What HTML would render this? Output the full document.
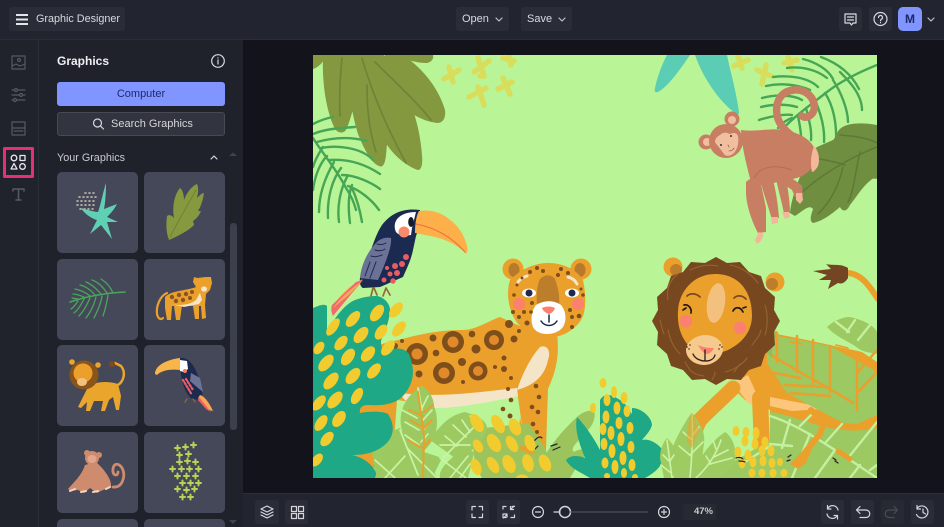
<!DOCTYPE html>
<html><head><meta charset="utf-8"><title>Graphic Designer</title>
<style>
*{box-sizing:border-box}
html,body{margin:0;padding:0;width:944px;height:527px;overflow:hidden;background:#13141b;font-family:"Liberation Sans",sans-serif}
#w{position:absolute;left:0;top:0;width:944px;height:527px;overflow:hidden;background:#13141b}
.a{position:absolute}
.btn{position:absolute;background:#2a2d38;border-radius:3px;color:#d9dae0;font-size:11px;line-height:24px;height:24px;white-space:nowrap}
.th{position:absolute;width:81px;height:81px;background:#454859;border-radius:5px;overflow:hidden}
svg{position:absolute;display:block;overflow:hidden}
</style></head><body><div id="w">
<div class="a" style="left:0;top:0;width:944px;height:40px;background:#22242f;border-bottom:1px solid #2b2d38"></div>
<div class="a" style="left:0;top:40px;width:39px;height:487px;background:#20222c;border-right:1px solid #2b2d38"></div>
<div class="a" style="left:39px;top:40px;width:204px;height:487px;background:#1f212b"></div>
<div class="a" style="left:243px;top:493px;width:701px;height:34px;background:#22242f;border-top:1px solid #2b2d38"></div>

<div class="btn" style="left:9px;top:7px;width:116px"><span class="a" style="left:27px;top:0;font-size:10.8px">Graphic Designer</span></div>
<div class="a" style="left:16px;top:14px;width:12px;height:1.5px;background:#e4e5ea;box-shadow:0 4.5px 0 #e4e5ea,0 9px 0 #e4e5ea"></div>
<div class="btn" style="left:456px;top:7px;width:53px;padding-left:6px">Open</div>
<div class="btn" style="left:521px;top:7px;width:51px;padding-left:6px">Save</div>
<div class="btn" style="left:839px;top:7px;width:23px"></div>
<div class="btn" style="left:869px;top:7px;width:23px"></div>
<div class="btn" style="left:898px;top:7px;width:24px;background:#8095ff;border-radius:5px;color:#1c2766;font-weight:bold;font-size:12px;text-align:center">M</div>

<div class="a" style="left:57px;top:53px;color:#f0f0f3;font-size:12px;font-weight:bold;line-height:16px">Graphics</div>
<div class="a" style="left:57px;top:82px;width:168px;height:24px;background:#8095ff;border-radius:3px;color:#1f2a6e;font-size:11px;line-height:24px;text-align:center">Computer</div>
<div class="a" style="left:57px;top:112px;width:168px;height:24px;background:#32353f;border:1px solid #474a55;border-radius:3px;color:#d5d6dc;font-size:11px;line-height:22px;padding-left:53px">Search Graphics</div>
<div class="a" style="left:57px;top:151px;color:#c9cad0;font-size:10.8px;line-height:14px">Your Graphics</div>
<div class="a" style="left:230px;top:223px;width:7px;height:207px;background:#3c3f4c;border-radius:3px"></div>

<div class="th" style="left:57px;top:172px"></div><div class="th" style="left:144px;top:172px"></div>
<div class="th" style="left:57px;top:259px"></div><div class="th" style="left:144px;top:259px"></div>
<div class="th" style="left:57px;top:345px"></div><div class="th" style="left:144px;top:345px"></div>
<div class="th" style="left:57px;top:432px"></div><div class="th" style="left:144px;top:432px"></div>
<div class="th" style="left:57px;top:519px;height:8px;border-radius:5px 5px 0 0"></div><div class="th" style="left:144px;top:519px;height:8px;border-radius:5px 5px 0 0"></div>

<div class="btn" style="left:255px;top:500px;width:24px"></div><div class="btn" style="left:285px;top:500px;width:23px"></div>
<div class="btn" style="left:466px;top:500px;width:23px"></div><div class="btn" style="left:497px;top:500px;width:23px"></div>
<div class="btn" style="left:821px;top:500px;width:23px"></div><div class="btn" style="left:851px;top:500px;width:23px"></div>
<div class="btn" style="left:881px;top:500px;width:23px;background:#272933"></div><div class="btn" style="left:911px;top:500px;width:23px"></div>
<div class="a" style="left:683px;top:504px;width:33px;height:16px;background:#272933;border-radius:2px;color:#c9cad0;font-size:9.5px;font-weight:bold;line-height:16px;text-align:right;padding-right:3px">47%</div>

<!-- chrome icons -->
<svg style="left:0;top:0" width="944" height="527" viewBox="0 0 944 527" fill="none" stroke-linecap="round" stroke-linejoin="round">
<g stroke="#d9dae0" stroke-width="1.2">
<path d="M496 18l3 3 3-3M559 18l3 3 3-3M928 18l3 3 3-3" stroke="#bfc0c7"/>
<path d="M845 14h11v9h-3l-1.500 2-1.500-2h-5zM847.500 17h6M847.500 20h6"/>
<circle cx="880.500" cy="19" r="6.500"/><path d="M878.500 17.500a2 2 0 1 1 3 1.700c-.7.400-1 .8-1 1.500M880.500 22.500v.2"/>
<circle cx="218" cy="61" r="6.300"/><path d="M218 60v4M218 57.800v.2"/>
<circle cx="97.500" cy="123" r="4"/><path d="M100.500 126l3 3"/>
<path d="M211 159l3-3 3 3"/>
</g>
<path d="M229 156l4-3.500 4 3.500zM229 520l4 4 4-4z" fill="#40434f"/>
<g stroke="#565966" stroke-width="1.200">
<rect x="12" y="56" width="13" height="13"/><circle cx="19" cy="60" r="1.500"/><path d="M12 66l4-2 4 2 5-2"/>
<path d="M12 90h13M12 95h13M12 100h13"/><circle cx="16" cy="90" r="1.500" fill="#20222c"/><circle cx="21" cy="95" r="1.500" fill="#20222c"/><circle cx="15" cy="100" r="1.500" fill="#20222c"/>
<rect x="12" y="122" width="13" height="13"/><path d="M12 128h13M14 131h9"/>
<path d="M13 189h11M13 189v2M24 189v2M18.500 189v11M16 200h5" stroke-width="1.500"/>
</g>
<rect x="4.500" y="148.500" width="28" height="28" stroke="#e62f78" stroke-width="3"/>
<g stroke="#e8e9ee" stroke-width="1.300">
<circle cx="14" cy="158" r="2.800"/><rect x="20" y="155.500" width="5" height="5"/><path d="M14 163.500l3 5.500h-6z"/><circle cx="22.500" cy="166.500" r="2.800"/>
</g>
<g stroke="#d5d6dc" stroke-width="1.200">
<path d="M267 506l6 3-6 3-6-3zM261 512l6 3 6-3M261 515l6 3 6-3"/>
<rect x="291.500" y="506.500" width="5" height="5"/><rect x="298.500" y="506.500" width="5" height="5"/><rect x="291.500" y="513.500" width="5" height="5"/><rect x="298.500" y="513.500" width="5" height="5"/>
<path d="M472 510v-3.500h3.500M479 506.500h3.500v3.500M482.500 514v3.500h-3.500M475.500 517.500h-3.500v-3.500"/>
<path d="M503 509v-2.500h3M512 506.500h2.500M503 514v3.500h3M511 517.500h3.500V515M514 506l-3.500 3.500M510.500 506.500v3h3M503.500 518l3.500-3.500M507 517v-3h-3"/>
<circle cx="538" cy="512" r="5.500"/><path d="M535.500 512h5"/>
<circle cx="664" cy="512" r="5.500"/><path d="M661.500 512h5M664 509.500v5"/>
<path d="M554 512h6"/><circle cx="565" cy="512" r="5.500" stroke-width="1.500"/>
<path d="M838 510a5.500 5.500 0 0 0-9.500-2.500l-1 1M827 514a5.500 5.500 0 0 0 9.500 2.500l1-1M827.500 505.500v3.500h3.500M837.500 519v-3.500H834"/>
<path d="M857 510h9a3.500 3.500 0 0 1 0 7.500h-6M860 506.500l-3.500 3.500 3.500 3.500"/>
<path d="M897 510h-8a3.500 3.500 0 0 0 0 7.500h5M894 506.500l3.500 3.500-3.500 3.500" stroke="#4a4c58"/>
<path d="M917 508.500a6 6 0 1 1-.5 6M917 505.500v3.500h3.500M923 509v3.500l2.500 1.500"/>
</g>
<path d="M570 512h78" stroke="#555863" stroke-width="1"/>
</svg>

<!-- thumbnails -->
<svg style="left:57px;top:172px" width="168" height="341" viewBox="57 172 168 341" fill="none" stroke-linecap="round" stroke-linejoin="round">
<g stroke="#c9c5b0" stroke-width="1.600" stroke-dasharray="1 3"><path d="M85 193h10M79 197h17M77 201h19M77 205h17M80 209h13"/></g>
<path d="M106 183C106 195 105 205 104 209L117 204C114 210 110 214 107 217L118 222 107 222 112 239 101 225 90 234 97 220C90 218 83 212 81 208 88 210 95 212 98 212 101 204 103 192 106 183z" fill="#5fd0b4"/>
<path d="M169 240C166 232 166 224 167 216 170 214 172 216 174 218 172 208 174 195 180 188 183 190 184 196 184 200 187 192 192 186 197 184 199 188 198 194 197 198 200 195 202 193 204 193 203 200 201 206 198 211L201 211C199 216 196 219 193 221L194 225C188 231 178 236 169 240z" fill="#86993f"/>
<path d="M170 237C176 225 186 208 196 190" stroke="#6e8238" stroke-width="1"/>
<g stroke="#4aa65a" stroke-width="1.300">
<path d="M125 292C105 293 88 296 70 302" stroke-width="1.600"/>
<path d="M113 293C110 286 106 282 101 279M107 293C103 287 98 282 92 280M101 294C97 289 91 284 86 282M95 295C91 290 85 286 80 285M90 296C85 292 80 290 75 289M84 297C79 295 76 294 73 294M78 299L72 298M108 295C107 302 105 310 103 316M102 296C101 304 97 312 94 318M96 297C94 305 90 313 86 318M90 298C87 305 84 311 79 316M84 299C81 305 78 310 74 313M78 301C76 304 74 307 71 309"/>
</g>
<path d="M167 293C160 296 156 306 157 314 158 319 161 320 163 318" stroke="#eba02c" stroke-width="2.200"/>
<path d="M165 297C172 290 186 291 196 287L193 282 194 277 197 278 206 277 211 277 212 283 210 290 206 294 205 305 206 318 202 319 201 306 199 306 199 319 195 319 193 306 182 305 180 320 176 320 174 306 172 306 171 320 167 320 165 308z" fill="#eba02c"/>
<path d="M171 304C180 306 190 305 196 300 198 297 199 294 200 293L202 300 199 304 184 307z" fill="#f5e6ca"/>
<g fill="#8a5520"><circle cx="172" cy="297" r="2.200"/><circle cx="179" cy="295" r="2.200"/><circle cx="186" cy="294" r="2.200"/><circle cx="192" cy="292" r="2"/><circle cx="176" cy="301" r="2.200"/><circle cx="183" cy="300" r="2.200"/><circle cx="190" cy="298" r="2"/></g>
<ellipse cx="204" cy="289" rx="3" ry="2.600" fill="#f5e6ca"/>
<path d="M88 387C96 381 108 381 118 384L121 396 119 410 116 410 113 397 109 400 105 411 101 411 103 401 94 401 90 411 86 411 87 402 81 408 78 407z" fill="#e9a52c"/>
<path d="M118 385C124 381 126 372 121 366L115 363" stroke="#e9a52c" stroke-width="2.500"/><circle cx="112" cy="364" r="3" fill="#7e4a1d"/>
<circle cx="72" cy="362" r="2.800" fill="#e9a52c"/><circle cx="98" cy="365" r="2.800" fill="#e9a52c"/>
<circle cx="84" cy="375" r="14.500" fill="#8b5419"/><circle cx="83" cy="373" r="9.500" fill="#eba02c"/><ellipse cx="82" cy="382" rx="5" ry="4" fill="#f3c07e"/>
<path d="M155 374C155 366 165 360 180 358L180 370C171 369 162 370 157 375z" fill="#f7b54a"/>
<path d="M180 358C190 357 196 368 200 382 203 392 203 398 200 400L192 399C184 392 180 380 180 358z" fill="#1c2a4f"/>
<path d="M180 360L187 361 188 369 184 372 180 371z" fill="#fff"/><circle cx="185" cy="371" r="2" fill="#f07f63"/>
<path d="M191 373L200 378 203 392 198 388 190 381z" fill="#6b7296"/>
<path d="M200 395C204 396 209 402 213 411 207 410 202 405 198 398z" fill="#f6a855"/><path d="M199 397L211 412 206 409 198 400z" fill="#ef5f66"/>
<path d="M183 380L192 395M186 379L193 390" stroke="#ee5c63" stroke-width="2.200" stroke-dasharray="1.500 2"/>
<path d="M187 399l-2 3M193 399l2 3" stroke="#8f6a3a" stroke-width="1.300"/>
<path d="M113 487C123 488 125 476 123 470 120 462 112 462 113 472 114 476 118 476 118 472" stroke="#cf8b6e" stroke-width="2.800"/>
<path d="M85 465L96 462C105 470 112 480 111 487L103 490 97 493 90 488 84 493 78 490 70 491 68 489C74 482 82 475 85 465z" fill="#cf8b6e"/>
<path d="M70 491l5-2M81 492l5-1M93 492l5-1M106 489l4-2" stroke="#f1d7bf" stroke-width="2"/>
<circle cx="87" cy="453" r="3" fill="#cf8b6e"/><circle cx="99" cy="455" r="3" fill="#cf8b6e"/><circle cx="92" cy="458" r="7" fill="#cf8b6e"/><ellipse cx="92" cy="459" rx="4.500" ry="4" fill="#e3a68b"/>
<g stroke="#b7d255" stroke-width="2">
<path d="M175 448h5M177.500 445.500v5M183 447h5M185.500 444.500v5M191 445h5M193.500 442.500v5M177 455h5M179.500 452.500v5M186 454h5M188.500 451.500v5M177 462h5M179.500 459.500v5M185 461h5M187.500 458.500v5M193 462h5M195.500 459.500v5M170 469h5M172.500 466.500v5M179 469h5M181.500 466.500v5M187 469h5M189.500 466.500v5M196 469h5M198.500 466.500v5M175 476h5M177.500 473.500v5M184 476h5M186.500 473.500v5M193 476h5M195.500 473.500v5M180 483h5M182.500 480.500v5M188 483h5M190.500 480.500v5M196 483h5M198.500 480.500v5M175 489h5M177.500 486.500v5M184 490h5M186.500 487.500v5M192 489h5M194.500 486.500v5M180 497h5M182.500 494.500v5M188 497h5M190.500 494.500v5"/>
</g>
</svg>

<!-- canvas -->
<svg style="left:313px;top:55px" width="564" height="423" viewBox="313 55 564 423" fill="none" stroke-linecap="round" stroke-linejoin="round">
<rect x="313" y="55" width="564" height="423" fill="#b9f596"/>
<g stroke="#d8de5b" stroke-width="5.500">
<path d="M444 79L459 70M449 67L453 82"/>
<path d="M474 72L489 61M478 58L484 76 480 76"/>
<path d="M469 97L486 88M478 87L484 105"/>
<path d="M498 89L512 82M503 78L510 94"/>
<path d="M503 58L514 61M509 56L511 65"/>
<path d="M734 66L748 60M738 56L742 68"/>
<path d="M757 70L771 76M766 65L762 84"/>
<path d="M784 63L797 60M788 57L792 70"/>
</g>
<g fill="#83983f">
<path d="M313 55h12c0 6-6 12-12 14z"/>
<path d="M323 55h38c-2 25-6 55-15 75-3 4-8 3-11-1-10-20-13-50-12-74z"/>
<path d="M359 55h22c8 28 8 74 5 100-1 9-3 13-7 11-6-2-14-14-21-32-7-22-11-55-12-79z"/>
<path d="M362 55h22c22 30 35 62 38 100 1 10-1 15-4 15-10-3-25-14-34-30-14-25-22-55-22-85z"/>
<path d="M385 55h18c22 15 36 35 42 55 1 8-2 13-8 13-15-2-29-10-36-20-10-15-16-30-16-48z"/>
<path d="M398 55h35c1 3-1 7-6 8-10 0-22-3-29-8z"/>
</g>
<g stroke="#6e8238" stroke-width="1.600">
<path d="M342 58c-2 20-3 38-2 58M367 85c0 25 2 45 9 67M362 58c10 35 25 70 44 105M375 62c20 20 40 38 56 58"/>
</g>
<g stroke="#46a655" stroke-width="2.400">
<path d="M313 138c10 16 24 32 33 50 4 6 8 14 10 22"/>
<path d="M313 124c8-4 14-6 20-7M313 134c12-5 26-6 42-7M317 142c18-5 35-5 50-1M321 148c15-3 40-1 52 12M330 160c14-1 32 2 50 14M342 175c14 0 30 8 38 14M348 186c12 4 24 14 31 24M313 167c2-7 6-14 10-20M313 190c2-16 8-28 14-34M319 212c0-20 8-38 15-50M328 218c-1-20 4-38 13-50M339 222c-2-15 1-32 8-45M350 223c-2-15-2-28 2-38M362 222c-2-12-6-25-10-34"/>
</g>
<path d="M667 55h23c-9 13-22 32-32 37-3 1-4-1-3-4 2-10 7-24 12-33z" fill="#5bcdb4"/>
<path d="M695 55h32c3 15 9 35 12 57 0 3-2 3-4 1-16-12-32-35-40-58z" fill="#5bcdb4"/>
<g stroke="#46a655" stroke-width="2.400">
<path d="M877 65c-20 8-37 17-50 27-18 14-35 26-47 40"/>
<path d="M803 59c12 3 25 10 30 20M821 57c16 6 30 16 38 32M840 72c8 8 22 22 22 38M833 80c8 12 15 30 15 42M787 68c15-2 30 2 40 10M773 77c15-2 35 0 45 10M766 86c14-3 30-2 44 4M762 98c14-4 32-3 40 2M761 107c12-3 26-3 36 0M759 120c12-4 26-6 33-5M778 128c4-5 8-8 14-10M825 93c8 12 12 30 11 50M815 100c6 14 10 28 9 42M806 108c3 12 6 22 5 32M798 115c1 8 3 15 3 22"/>
</g>
<path d="M877 125c-15-3-30-2-36 3-5 4-4 8-8 12l-16 7c-8 7-13 18-17 30-5 12-9 25-10 36l5 3c8-5 14-12 18-7 -2 6-4 12 0 14 10-2 20-10 27-16 2 4 6 6 10-2 8-10 12-18 21-25 2-3 6 0 6-2z" fill="#6f8e40"/>
<g stroke="#5c7a36" stroke-width="1.500"><path d="M877 147c-30 12-60 30-80 50M843 167c-3 15-12 35-25 47M860 152c-4 15-6 40-12 50M845 165c-15-5-30-7-45-8M840 135c15 1 28 3 37 8"/></g>
<path d="M803 143c-10-6-24-15-26-28-2-15 5-24 17-25 13-1 22 9 20 20-2 6-8 9-12 6" stroke="#c87e62" stroke-width="7.500"/>
<path d="M741 130C755 132 770 128 785 130 800 133 812 140 815 150 818 160 812 172 800 177 790 180 770 184 752 186 748 170 742 150 741 130z" fill="#c87e62"/>
<path d="M746 182C752 176 758 178 761 184L766 208 766 232 758 233C752 222 746 205 746 192z" fill="#c87e62"/>
<path d="M760 178L772 176C776 190 778 205 779 218L772 220C768 205 762 190 760 178z" fill="#c87e62"/>
<path d="M776 178L786 178C788 190 790 202 790 213L784 214C782 202 778 190 776 178z" fill="#c87e62"/>
<path d="M766 168C780 172 794 178 802 186L803 196 795 197 792 190C785 184 772 180 760 178z" fill="#c87e62"/>
<path d="M814 146c5 5 6 14 4 20-1 2-4 6-6 6-2-8-1-18 2-26z" fill="#f4b79a"/>
<path d="M754 178c6-12 22-14 38-8" stroke="#b46e54" stroke-width="1"/>
<path d="M759 232l5 2-3 7-4 3-2-4zM771 217h7l0 6-6 1zM782 212h7l1 5-5 2zM796 193h6l1 7-3 4-4-4z" fill="#f0b79a"/>
<circle cx="732" cy="119" r="7.500" fill="#c87e62"/><circle cx="732" cy="120" r="4" fill="#f2bea0"/>
<circle cx="706" cy="142" r="7.500" fill="#c87e62"/><circle cx="707" cy="142" r="4" fill="#f2bea0"/>
<ellipse cx="726" cy="141" rx="17" ry="17" fill="#c87e62"/>
<path d="M720 135c4-4 8-2 10-1 4-2 7-1 8 2 1 6 0 12-4 17-3 3-8 4-10 1-4-6-8-10-9-12 0-4 3-6 5-7z" fill="#f2bea0"/>
<circle cx="721" cy="145" r="1" fill="#333"/><circle cx="731" cy="136" r="1" fill="#333"/><path d="M729 151c2 0 4-1 5-3M728 145l1 2" stroke="#8a5a48" stroke-width=".8"/>
<path d="M848 273c14 1 22 14 30 26" stroke="#eba02c" stroke-width="6"/>
<path d="M848 268c-8-5-15-2-22-4l5 5-18 2 14 4-8 5 12 0-3 9 10-6c5 2 8-2 10-5z" fill="#744522"/>
<path d="M765 332C790 336 830 345 862 352L877 362 877 478 770 478 770 410 745 400 733 388 755 360z" fill="#eba02c"/>
<path d="M733 383l15-8 15 33-15-5z" fill="#fcc77d"/><path d="M770 397l47 9 5 3-30 2-22-5z" fill="#fcc77d"/>
<path d="M733 388c-12 12-26 24-33 32-5 8-6 18-8 28" stroke="#eba02c" stroke-width="15"/>
<path d="M760 398l2 50" stroke="#eba02c" stroke-width="16"/>
<path d="M770 412C800 416 835 438 877 428L877 478 700 478C720 470 745 455 770 440z" fill="#9cc962"/>
<path d="M827 327c5-5 15-10 22-10 12 2 25 8 28 15v22c-10-2-15-2-22-8-8-5-20-10-28-19z" fill="#9cc962"/>
<path d="M761 333l16-2 0 6-14 6-3-3z" fill="#8fbd5f"/>
<path d="M767 346L777 336 830 346 877 372 877 415 857 424 843 423 813 407 787 393 767 363z" fill="#9cc962"/>
<g stroke="#eb9f2c" stroke-width="2.500">
<path d="M767 352C790 368 825 385 853 403M857 360L857 410M777 333V362M797 336V372M813 340V384M830 346V392M775 373L800 378M785 385L827 387M790 393L830 396M877 350L858 372M877 372L858 392"/>
<path d="M836 345l12 3M852 352l10 5M790 342l12 2" stroke-width="1.600"/>
</g>
<g stroke="#c4f1a0" stroke-width="2.400">
<path d="M770 416C800 425 835 450 877 478M800 426l14-14M826 442l16-18M848 458l29-36M870 470l7-5M790 420l-8 28M810 434l-18 44M835 450l-20 28M860 465l-10 13M770 444l22 2M745 462l25-16"/>
<path d="M836 322l13 10M855 320l-8 12M870 325l-12 15"/>
</g>
<path d="M811 410c4 4 8 8 14 9l-5 15-18 22" stroke="#eb9f2c" stroke-width="6"/>
<path d="M790 464l14-14 8-1-6 14-8 6z" fill="#eb9f2c"/>
<path d="M838 451l12 8" stroke="#eb9f2c" stroke-width="5"/>
<path d="M762 340l10 8 0 10-8-8z" fill="#8fbd5f"/>
<circle cx="673" cy="267" r="9.500" fill="#eba02c"/><circle cx="676" cy="270" r="6" fill="#bd7e2c"/>
<circle cx="775" cy="282" r="9.500" fill="#eba02c"/><circle cx="772" cy="284" r="6" fill="#bd7e2c"/>
<path d="M780 321L774 332 775 345 765 354 761 366 749 370 741 380 727 379 716 385 705 379 692 380 683 370 671 366 667 354 657 345 658 332 652 321 658 310 657 297 667 288 671 276 683 272 691 262 705 263 716 257 727 263 740 262 749 272 761 276 765 288 775 297 774 310z" fill="#774820"/>
<g stroke="#96632f" stroke-width="1.100"><path d="M690 270c8-4 18-6 28-4M730 265c12 2 22 10 28 18M668 300c-2-12 2-20 10-26M765 305c3 10 3 20 0 30M668 330c2 10 6 18 12 24M690 370c4 4 8 5 14 6M725 372c8-2 16-6 22-14M752 345c4-5 8-10 9-15M660 320c2 6 2 10 4 14M712 380c2-3 3-5 3-8M685 362l5 8M740 364l-6 8"/></g>
<path d="M715 274c26 0 37 20 37 41 0 17-10 28-24 35-13 5-26 6-38-3-8-8-13-20-12-36 1-20 16-37 37-37z" fill="#eba02c"/>
<ellipse cx="716" cy="303" rx="9" ry="20" transform="rotate(8 716 303)" fill="#f3c07e"/>
<circle cx="686" cy="321" r="6.300" fill="#fb8070"/><circle cx="740" cy="328" r="6.300" fill="#fb8070"/>
<path d="M686 350c0-8 10-15 19-15 10 0 18 6 18 14 0 8-9 16-19 16-10 0-18-7-18-15z" fill="#f6c98c"/>
<path d="M698 345c6 3 12 3 16 3-2 4-5 6-7 6-3 0-7-5-9-9z" fill="#fb8070"/>
<path d="M693 354c2 5 8 7 12 7 5 0 9-2 10-6M705 350v11" stroke="#2a1c1c" stroke-width="1.300"/>
<path d="M687 347v.1M690 345v.1M689 349v.1M719 349v.1M722 347v.1M720 345v.1" stroke="#2a1c1c" stroke-width="1.400"/>
<path d="M687 296c3-3 9-3 13 1M734 298c3-3 8-3 12 1" stroke="#7a4a20" stroke-width="1.800"/>
<path d="M684 305c4-1 8 3 7 8M683 310l3-2M733 311c2-4 7-5 10 1M743 308l3-1" stroke="#22181a" stroke-width="1.700"/>
<path d="M525 447l-8-57-90 14-30-4-5 70-50-5-10-40 15-60 30-20c25-5 50-15 85-15 15 0 28-10 38-13l35 16 22 0c3 25-2 40-9 56l-2 60 2 22-8 2-9 0-3-16-8-40-4 47z" fill="#eba02c"/>
<path d="M540 347C548 344 551 352 548 360 545 375 535 385 517 390 522 375 530 358 540 347z" fill="#f4e5c9"/>
<path d="M400 393C440 398 480 392 517 388L518 396C490 402 460 408 437 408 420 408 405 405 400 393z" fill="#f4e5c9"/>
<circle cx="513" cy="269" r="10.500" fill="#eba02c"/><ellipse cx="514" cy="270" rx="5.500" ry="7" fill="#b67a2a"/>
<circle cx="581" cy="269" r="10.500" fill="#eba02c"/><ellipse cx="580" cy="270" rx="5.500" ry="7" fill="#b67a2a"/>
<path d="M510 280c12-12 26-17 38-17 15 0 28 6 35 17 3 14 3 28 0 36-6 14-22 22-37 22-12 0-26-8-33-22-6-14-6-26-3-36z" fill="#eba02c"/>
<path d="M540 279c5-5 11-5 15 0 3 8 5 18 4 26l-22 0c-1-10 0-20 3-26z" fill="#bd7e2c"/>
<path d="M527 276c-3 1-7 3-9 6M568 277c4 1 7 3 9 7" stroke="#f4e5c9" stroke-width="3"/>
<path d="M536 305c8-5 18-5 25 0 5 6 6 15 2 22-4 5-10 7-16 7-7 0-12-3-14-7-3-8-1-17 3-22z" fill="#fff"/>
<path d="M542 308c4-2 9-2 13 0-1 3-3 5-6 6-3-1-6-3-7-6z" fill="#fb8070"/>
<path d="M541 321c4 6 12 6 16 0M549 315v7" stroke="#1d2950" stroke-width="1.500"/>
<circle cx="519" cy="304" r="6" fill="#fb8070"/><circle cx="578" cy="304" r="6" fill="#fb8070"/>
<ellipse cx="529" cy="293" rx="7" ry="4.500" fill="#fff"/><circle cx="529" cy="293" r="3.500" fill="#1d2950"/>
<ellipse cx="572" cy="293" rx="7" ry="4.500" fill="#fff"/><circle cx="572" cy="293" r="3.500" fill="#1d2950"/>
<g fill="#7e4e1b">
<circle cx="453" cy="342" r="11"/><circle cx="494" cy="340" r="10"/><circle cx="417" cy="354" r="11"/><circle cx="444" cy="373" r="11"/><circle cx="478" cy="371" r="9.500"/>
<circle cx="433" cy="338" r="3.500"/><circle cx="472" cy="334" r="3.300"/><circle cx="476" cy="349" r="4.500"/><circle cx="509" cy="324" r="4"/><circle cx="514" cy="339" r="3.500"/><circle cx="436" cy="353" r="3.300"/><circle cx="462" cy="362" r="4"/><circle cx="495" cy="367" r="2"/><circle cx="504" cy="369" r="3"/><circle cx="504" cy="358" r="2.500"/><circle cx="419" cy="374" r="3.500"/><circle cx="463" cy="382" r="2"/><circle cx="511" cy="378" r="2"/><circle cx="519" cy="331" r="2"/><circle cx="527" cy="323" r="2.500"/><circle cx="519" cy="317" r="2"/><circle cx="513" cy="312" r="2"/><circle cx="524" cy="312" r="2"/><circle cx="531" cy="312" r="1.800"/><circle cx="532" cy="303" r="2"/><circle cx="570" cy="310" r="2"/><circle cx="572" cy="317" r="2"/><circle cx="579" cy="316" r="2.300"/><circle cx="572" cy="327" r="2"/><circle cx="508" cy="389" r="2"/><circle cx="511" cy="400" r="2.300"/><circle cx="503" cy="409" r="2.300"/><circle cx="510" cy="416" r="2.500"/><circle cx="536" cy="386" r="2.300"/><circle cx="539" cy="397" r="2.300"/><circle cx="532" cy="407" r="2.300"/><circle cx="538" cy="412" r="2.300"/><circle cx="533" cy="424" r="2.300"/><circle cx="537" cy="432" r="2"/><circle cx="402" cy="341" r="2"/><circle cx="530" cy="272" r="2"/><circle cx="537" cy="268" r="2"/><circle cx="543" cy="271" r="2"/><circle cx="558" cy="275" r="2"/><circle cx="561" cy="269" r="2"/><circle cx="568" cy="273" r="2"/><circle cx="522" cy="278" r="1.500"/><circle cx="517" cy="285" r="1.500"/><circle cx="514" cy="295" r="1.800"/><circle cx="583" cy="295" r="1.800"/><circle cx="581" cy="289" r="1.500"/>
<circle cx="385" cy="358" r="3"/><circle cx="379" cy="358" r="3"/><circle cx="395" cy="346" r="3"/>
</g>
<g fill="#e2892a"><circle cx="453" cy="342" r="5.500"/><circle cx="494" cy="340" r="5"/><circle cx="417" cy="354" r="5.500"/><circle cx="444" cy="373" r="5.500"/><circle cx="478" cy="371" r="5"/></g>
<path d="M333 450c12 10 24 9 32 4" stroke="#eba02c" stroke-width="6"/>
<path d="M378 450l-5 14 14 8 6-20z" fill="#eba02c"/>
<path d="M420 210C405 208 392 212 382 225 375 235 372 250 362 272 358 280 360 287 363 288L380 287 403 277C407 268 411 260 413 250L416 236 420 225z" fill="#1b2a50"/>
<path d="M416 212L412 228 411 235C405 236 399 236 396 232 394 228 394 222 398 218 402 214 408 212 416 212z" fill="#fff"/>
<ellipse cx="411" cy="222" rx="2.800" ry="5" fill="#141a2c"/>
<circle cx="404" cy="232" r="5.500" fill="#fa8a6c"/>
<path d="M419 211c12-2 24 2 31 9 9 6 15 17 17 26 1 4 0 7-1 8-8-9-19-14-31-17l-20-4c0-8 1-17 4-22z" fill="#fdb04a"/>
<path d="M416 224c16 3 33 10 49 28" stroke="#ee6b3f" stroke-width="1"/>
<path d="M391 238C392 246 386 262 378 280L360 278C361 265 368 250 378 241 382 238 387 237 391 238z" fill="#6b7296"/>
<g stroke="#1b2a50" stroke-width="1"><path d="M386 243c-3 2-6 2-9 1M385 249c-3 2-7 2-10 1M382 255c-4 2-8 2-11 1M370 262l-5 14M376 262l-6 16"/></g>
<g fill="#ea5c63"><circle cx="406" cy="257" r="3"/><circle cx="402" cy="264" r="3"/><circle cx="395" cy="266" r="3"/><circle cx="397" cy="273" r="3"/><circle cx="390" cy="274" r="2.500"/><circle cx="393" cy="281" r="2.700"/><circle cx="384" cy="280" r="2.500"/><circle cx="387" cy="268" r="2"/></g>
<path d="M363 279C350 285 338 296 331 310L345 294z" fill="#f8b650"/><path d="M363 280L333 316C331 312 331 308 332 305L356 282z" fill="#f4696e"/><path d="M362 281C352 288 340 298 333 308L350 294z" fill="#f5a95a"/>
<path d="M373 288l-2 8M374 288l3 7M386 288l-3 8M386 288l4 7" stroke="#8f6a3a" stroke-width="1.700"/>
<path d="M475 428c20 0 40 -4 53-5 8 10 22 30 26 50l-2 5h-70c-10-15-10-35-7-50z" fill="#9dc45c"/>
<path d="M536 478c2-15 18-40 40-60 6-6 12-8 18-7 2 6 0 15-12 25-6 8-12 12-8 16 3-2 10-4 16-2-8 8-14 18-20 28z" fill="#9dc45c"/>
<g fill="#9cc960">
<path d="M422 386c4 2 12 10 12 20 4 10 4 22 0 32-5 8-10 14-15 16-8-4-16-18-18-28 -2-15 4-30 21-40z"/>
<path d="M430 440c10-15 20-25 35-28 12 4 22 8 22 17-4 14-18 26-32 29z"/>
<path d="M370 440l30-12 12 20 30 10-10 20h-56z"/>
<path d="M440 478c-2-8 8-18 22-28 6-2 10 0 12 3l-6 25z"/>
<path d="M395 478l8-30 18 6 17 24z"/>
</g>
<g stroke="#c9f4a3" stroke-width="1.700">
<path d="M418 388l4 22M402 410l15 8M405 422l14 8M428 396l-7 14M432 410l-9 10M430 422l-7 8M405 435l14 10M428 434l-7 8M443 458l30-30M445 436l12 10M453 425l13 12M462 420l8 12M470 416l12 8M440 445l30 0M437 478l-30-30M400 430l18 45M385 478l20-22M375 460l20 18M440 458l26 20M450 478l18-22M460 478l10-14"/>
</g>
<path d="M418 392l6 44-1 42M423 416l-14-6M424 428l-14-8M424 412l9-7M424 428l8-8M422 448l-14-8M423 448l7-8" stroke="#eb9f2c" stroke-width="2"/>
<path d="M530 447c5-8 9-12 12-9M553 450l7-3M551 446l6-2M535 449l3-3" stroke="#1d2433" stroke-width="1.200"/>
<path d="M522 448l10 4" stroke="#eba02c" stroke-width="5"/>
<path d="M313 308c5-2 11-5 14-2l0 26c8-15 18-28 28-32 8-3 15-4 22-4 6 1 12 6 13 13 0 8-3 18-8 29-2 4-1 9 2 14 10-5 20-5 25 2 6 15 6 28-6 42-8 8-20 10-35 9-6 0-9 3-8 8 10-2 22-2 28 1 8 12 6 25-6 33-9 6-17 8-30 8 14 3 22 12 24 18 0 5-2 9-5 10h-60z" fill="#1ea886"/>
<g fill="#f2cc2e">
<ellipse cx="353" cy="319" rx="9.500" ry="5" transform="rotate(-50 353 319)"/><ellipse cx="377" cy="313" rx="9.500" ry="5.500" transform="rotate(-55 377 313)"/><ellipse cx="333" cy="327" rx="10" ry="4.500" transform="rotate(-55 333 327)"/><ellipse cx="396" cy="310" rx="9" ry="5" transform="rotate(-50 396 310)"/><ellipse cx="399" cy="329" rx="9" ry="5" transform="rotate(-50 399 329)"/>
<ellipse cx="341" cy="343" rx="8.500" ry="5" transform="rotate(-50 341 343)"/><ellipse cx="361" cy="335" rx="9.500" ry="5.500" transform="rotate(-50 361 335)"/><ellipse cx="381" cy="332" rx="8.500" ry="5" transform="rotate(-55 381 332)"/><ellipse cx="348" cy="357" rx="9.500" ry="5.500" transform="rotate(-55 348 357)"/><ellipse cx="368" cy="354" rx="9" ry="5.500" transform="rotate(-50 368 354)"/><ellipse cx="388" cy="348" rx="9" ry="5" transform="rotate(-50 388 348)"/><ellipse cx="319" cy="348" rx="7" ry="4.500" transform="rotate(-55 319 348)"/><ellipse cx="326" cy="363" rx="10" ry="5.500" transform="rotate(-50 326 363)"/><ellipse cx="374" cy="371" rx="9" ry="5" transform="rotate(-50 374 371)"/><ellipse cx="353" cy="376" rx="9.500" ry="5.500" transform="rotate(-50 353 376)"/><ellipse cx="331" cy="381" rx="10" ry="5.500" transform="rotate(-50 331 381)"/><ellipse cx="357" cy="396" rx="9" ry="4.800" transform="rotate(-60 357 396)"/><ellipse cx="335" cy="400" rx="10" ry="5.500" transform="rotate(-50 335 400)"/><ellipse cx="319" cy="403" rx="9" ry="4.800" transform="rotate(-50 319 403)"/><ellipse cx="339" cy="419" rx="9" ry="5.500" transform="rotate(-55 339 419)"/><ellipse cx="321" cy="423" rx="9" ry="5" transform="rotate(-55 321 423)"/><ellipse cx="327" cy="439" rx="8.500" ry="5" transform="rotate(-50 327 439)"/><ellipse cx="317" cy="460" rx="7.500" ry="4.500" transform="rotate(-50 317 460)"/>
<ellipse cx="477" cy="423" rx="10" ry="5.500" transform="rotate(60 477 423)"/><ellipse cx="498" cy="424" rx="10" ry="5.500" transform="rotate(60 498 424)"/><ellipse cx="515" cy="427" rx="9" ry="5.500" transform="rotate(65 515 427)"/><ellipse cx="494" cy="443" rx="10" ry="6" transform="rotate(60 494 443)"/><ellipse cx="512" cy="444" rx="9" ry="5" transform="rotate(60 512 444)"/><ellipse cx="478" cy="446" rx="7" ry="4.500" transform="rotate(60 478 446)"/><ellipse cx="530" cy="443" rx="8.500" ry="5" transform="rotate(70 530 443)"/><ellipse cx="493" cy="465" rx="9" ry="5" transform="rotate(60 493 465)"/><ellipse cx="509" cy="464" rx="9.500" ry="6" transform="rotate(65 509 464)"/><ellipse cx="528" cy="463" rx="9" ry="5.500" transform="rotate(75 528 463)"/><ellipse cx="545" cy="463" rx="9" ry="5.500" transform="rotate(65 545 463)"/><ellipse cx="476" cy="467" rx="8.500" ry="5" transform="rotate(70 476 467)"/><ellipse cx="522" cy="478" rx="6" ry="3.500"/>
</g>
<g fill="#1ea886">
<path d="M577 417C585 425 595 440 600 450L600 478 590 478C580 472 570 468 566 460 570 455 578 455 585 458 580 445 574 430 577 417z"/>
<path d="M600 400C605 392 612 395 620 400 628 405 633 415 636 425L636 478 600 478z"/>
<path d="M632 408C642 408 652 418 652 425 650 432 645 436 642 440 650 438 660 445 664 452 664 462 660 470 645 478L630 478z"/>
</g>
<g fill="#f2cc2e">
<ellipse cx="603" cy="383" rx="3.500" ry="5"/><ellipse cx="614" cy="392" rx="3" ry="6"/><ellipse cx="624" cy="398" rx="3.500" ry="6"/><ellipse cx="607" cy="400" rx="3.500" ry="6"/><ellipse cx="617" cy="408" rx="3.500" ry="6.500"/><ellipse cx="606" cy="417" rx="3.500" ry="6.500"/><ellipse cx="627" cy="411" rx="3.500" ry="6"/><ellipse cx="619" cy="423" rx="3.500" ry="6"/><ellipse cx="630" cy="428" rx="3.500" ry="6"/><ellipse cx="603" cy="429" rx="3.500" ry="6"/><ellipse cx="611" cy="433" rx="3.500" ry="7"/><ellipse cx="621" cy="439" rx="3.500" ry="7"/><ellipse cx="604" cy="444" rx="3.500" ry="6"/><ellipse cx="612" cy="451" rx="3.500" ry="7"/><ellipse cx="631" cy="447" rx="3.500" ry="6"/><ellipse cx="623" cy="458" rx="3.500" ry="7"/><ellipse cx="605" cy="463" rx="3.500" ry="5.500"/><ellipse cx="615" cy="467" rx="3.500" ry="7"/><ellipse cx="632" cy="465" rx="3.500" ry="6"/><ellipse cx="624" cy="473" rx="3" ry="5"/><ellipse cx="607" cy="476" rx="3" ry="3"/><ellipse cx="635" cy="477" rx="3" ry="3"/>
<ellipse cx="593" cy="408" rx="3" ry="5"/>
</g>
<g fill="#9fcc62">
<path d="M692 412c6 10 14 18 12 32-2 12-2 22-4 34h-26l-6-18c4-14 14-34 24-48z"/>
<path d="M725 432c8 5 12 18 10 28-4 8-10 14-18 18h-25c5-18 18-36 33-46z"/>
<path d="M667 438c6 6 12 14 10 26-2 4-3 10-5 14h-8l-4-20c0-8 3-16 7-20z"/>
</g>
<g stroke="#c9f4a3" stroke-width="1.600"><path d="M692 412c1 20 0 45-2 66M683 432l9 8M679 446l12 10M699 427l-7 9M703 442l-12 12M721 440c-5 15-14 28-25 38M713 440l3 9M728 450l-14 7M706 456l5 8M732 458l-22 6M667 440l5 38M663 455l6 6M674 455l-4 6M661 465l10 8"/></g>
<path d="M692 412c-4 10-7 24-4 32l4 4c3-8 4-12 8-16z" fill="#eba02c" opacity=".55"/>
<g fill="#f2cc2e">
<ellipse cx="736" cy="431" rx="3.500" ry="5"/><ellipse cx="746" cy="432" rx="3.500" ry="5"/><ellipse cx="756" cy="433" rx="3.500" ry="6"/><ellipse cx="745" cy="441" rx="3.500" ry="5.500"/><ellipse cx="755" cy="444" rx="3.500" ry="5.500"/><ellipse cx="765" cy="442" rx="3.500" ry="5.500"/><ellipse cx="738" cy="452" rx="3.500" ry="5.500"/><ellipse cx="748" cy="455" rx="3.500" ry="5.500"/><ellipse cx="762" cy="451" rx="3.500" ry="5.500"/><ellipse cx="771" cy="451" rx="3.500" ry="5.500"/><ellipse cx="742" cy="463" rx="3.500" ry="5.500"/><ellipse cx="753" cy="462" rx="3.500" ry="5.500"/><ellipse cx="763" cy="461" rx="3.500" ry="5.500"/><ellipse cx="772" cy="463" rx="3.500" ry="5"/><ellipse cx="780" cy="462" rx="3" ry="4"/><ellipse cx="752" cy="473" rx="3.500" ry="4.500"/><ellipse cx="762" cy="473" rx="3.500" ry="4.500"/><ellipse cx="773" cy="473" rx="3.500" ry="4.500"/><ellipse cx="784" cy="473" rx="3.500" ry="4"/>
</g>
<path d="M736 458c3-1 5-1 7 1M739 461c3 0 4 0 6 1M788 457l3-2M787 461l3-1M833 458l3 2M835 461l3 2" stroke="#2a2020" stroke-width="1.200"/>
</svg>
</div></body></html>
